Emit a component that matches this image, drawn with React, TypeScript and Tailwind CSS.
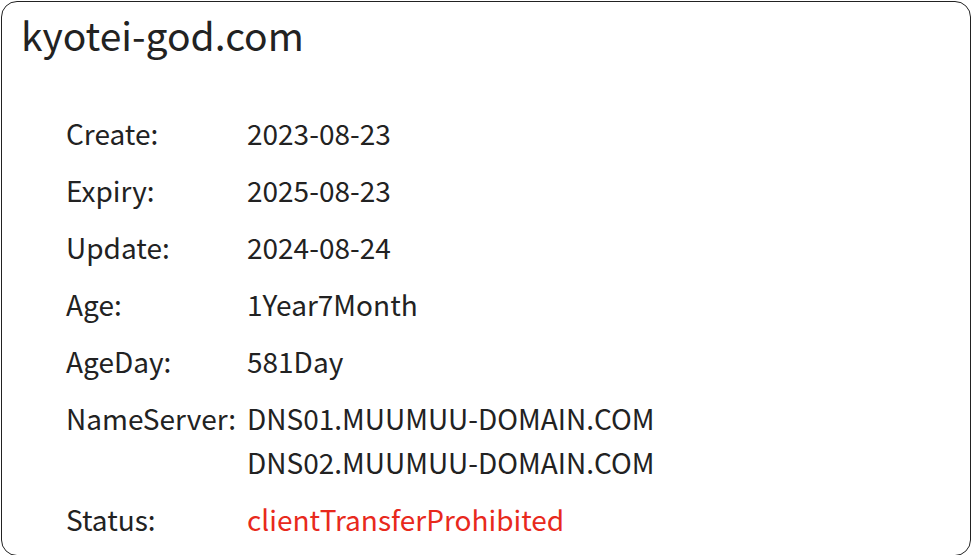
const rows: { label: string; values: string[]; red?: boolean }[] = [
  { label: "Create:", values: ["2023-08-23"] },
  { label: "Expiry:", values: ["2025-08-23"] },
  { label: "Update:", values: ["2024-08-24"] },
  { label: "Age:", values: ["1Year7Month"] },
  { label: "AgeDay:", values: ["581Day"] },
  {
    label: "NameServer:",
    values: ["DNS01.MUUMUU-DOMAIN.COM", "DNS02.MUUMUU-DOMAIN.COM"],
  },
  { label: "Status:", values: ["clientTransferProhibited"], red: true },
]

export default function App() {
  return (
    <div
      className="w-[972px] h-[555px] bg-white"
      style={{ fontFamily: '"Noto Sans CJK JP", "Noto Sans", sans-serif' }}
    >
      <div className="h-full border border-[#222] rounded-[16px] ml-px mt-px mr-px mb-px pl-[19px] pt-[4px] text-[#222]">
        <h1 className="text-[39px] leading-[56px]">kyotei-god.com</h1>
        <div className="mt-[49px] pl-[45px] flex flex-col gap-[13px]">
          {rows.map(row => (
            <div key={row.label} className="flex text-[28px] leading-[44px]">
              <div className="w-[181px] shrink-0">{row.label}</div>
              <div className={row.red ? "text-[#e8291c]" : ""}>
                {row.values.map(v => (
                  <div key={v}>{v}</div>
                ))}
              </div>
            </div>
          ))}
        </div>
      </div>
    </div>
  )
}
